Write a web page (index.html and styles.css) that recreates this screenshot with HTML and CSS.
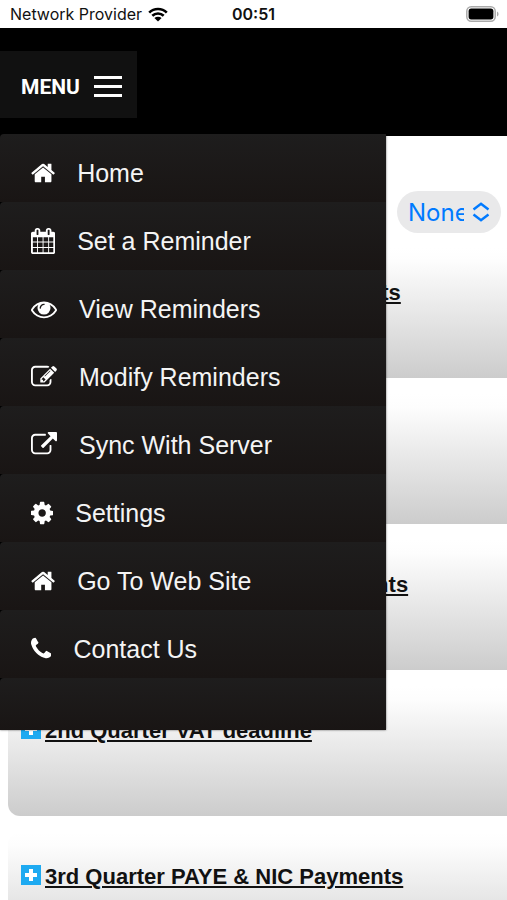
FILE: index.html
```html
<!DOCTYPE html>
<html lang="en">
<head>
  <meta charset="UTF-8">
  <meta name="viewport" content="width=device-width, initial-scale=1.0">
  <title>Reminders</title>
  <link rel="stylesheet" href="styles.css">
</head>
<body>
  <div class="status-bar">
    <div class="carrier">
      <span>Network Provider</span>
      <svg class="wifi" viewBox="0 0 20 15" aria-hidden="true">
        <path d="M1.2 5.6a12.6 12.6 0 0 1 17.6 0M4.3 8.8a8.2 8.2 0 0 1 11.4 0" fill="none" stroke="#000" stroke-width="2.6"/>
        <path d="M10 14.6l-3.6-3.5a5.2 5.2 0 0 1 7.2 0z"/>
      </svg>
    </div>
    <span class="time">00:51</span>
    <div class="power">
      <svg class="battery" viewBox="0 0 33 16" aria-hidden="true">
        <rect x="0.8" y="0.8" width="28.4" height="14.4" rx="4.4" fill="#fff" stroke="#aaa" stroke-width="1.5"/>
        <rect x="2.6" y="2.6" width="24.8" height="10.8" rx="2.6"/>
        <path d="M31 5.6q1.6.8 1.6 2.4t-1.6 2.4z" fill="#aaa"/>
      </svg>
    </div>
  </div>

  <header class="header">
    <button class="menu-button" id="menuButton" aria-controls="menu" aria-expanded="true">
      MENU
      <span class="bars"><span></span><span></span><span></span></span>
    </button>

    <nav class="menu" id="menu">
      <a href="#home">
        <svg viewBox="64 0 1664 1792"><path d="M1472 992v480q0 26-19 45t-45 19h-384v-384h-256v384h-384q-26 0-45-19t-19-45v-480q0-1 .5-3t.5-3l575-474 575 474q1 2 1 6zm223-69l-62 74q-8 9-21 11h-3q-13 0-21-7l-692-577-692 577q-12 8-24 7-13-2-21-11l-62-74q-8-10-7-23.5t11-21.5l719-599q32-26 76-26t76 26l244 204v-195q0-14 9-23t23-9h192q14 0 23 9t9 23v408l219 182q10 8 11 21.5t-7 23.5z"/></svg>
        Home
      </a>
      <a href="#set">
        <svg viewBox="64 0 1664 1792"><path d="M192 1664h288v-288h-288v288zm352 0h320v-288h-320v288zm-352-352h288v-320h-288v320zm352 0h320v-320h-320v320zm-352-384h288v-288h-288v288zm736 736h320v-288h-320v288zm-384-736h320v-288h-320v288zm768 736h288v-288h-288v288zm-384-352h320v-320h-320v320zm-352-864v-288q0-13-9.5-22.5t-22.5-9.5h-64q-13 0-22.5 9.5t-9.5 22.5v288q0 13 9.5 22.5t22.5 9.5h64q13 0 22.5-9.5t9.5-22.5zm736 864h288v-320h-288v320zm-384-384h320v-288h-320v288zm384 0h288v-288h-288v288zm32-480v-288q0-13-9.5-22.5t-22.5-9.5h-64q-13 0-22.5 9.5t-9.5 22.5v288q0 13 9.5 22.5t22.5 9.5h64q13 0 22.5-9.5t9.5-22.5zm384-64v1280q0 52-38 90t-90 38h-1408q-52 0-90-38t-38-90v-1280q0-52 38-90t90-38h128v-96q0-66 47-113t113-47h64q66 0 113 47t47 113v96h384v-96q0-66 47-113t113-47h64q66 0 113 47t47 113v96h128q52 0 90 38t38 90z"/></svg>
        Set a Reminder
      </a>
      <a href="#view">
        <svg viewBox="0 0 1792 1792"><path d="M1664 960q-152-236-381-353 61 104 61 225 0 185-131.5 316.5t-316.5 131.5-316.5-131.5-131.5-316.5q0-121 61-225-229 117-381 353 133 205 333.5 326.5t434.5 121.5 434.5-121.5 333.5-326.5zm-720-384q0-20-14-34t-34-14q-125 0-214.5 89.5t-89.5 214.5q0 20 14 34t34 14 34-14 14-34q0-86 61-147t147-61q20 0 34-14t14-34zm848 384q0 34-20 69-140 230-376.5 368.5t-499.5 138.5-499.5-139-376.5-368q-20-35-20-69t20-69q140-229 376.5-368t499.5-139 499.5 139 376.5 368q20 35 20 69z"/></svg>
        View Reminders
      </a>
      <a href="#modify">
        <svg viewBox="0 0 1792 1792"><path d="M888 1184l116-116-152-152-116 116v56h96v96h56zm440-720q-16-16-33 1l-350 350q-17 17-1 33t33-1l350-350q17-17 1-33zm80 594v190q0 119-84.5 203.5t-203.5 84.5h-832q-119 0-203.5-84.5t-84.5-203.5v-832q0-119 84.5-203.5t203.5-84.5h832q63 0 117 25 15 7 18 23 3 17-9 29l-49 49q-14 14-32 8-23-6-45-6h-832q-66 0-113 47t-47 113v832q0 66 47 113t113 47h832q66 0 113-47t47-113v-126q0-13 9-22l64-64q15-15 35-7t20 29zm-96-738l288 288-672 672h-288v-288zm444 132l-92 92-288-288 92-92q28-28 68-28t68 28l152 152q28 28 28 68t-28 68z"/></svg>
        Modify Reminders
      </a>
      <a href="#sync">
        <svg viewBox="0 0 1792 1792"><path d="M1408 928v320q0 119-84.5 203.5t-203.5 84.5h-832q-119 0-203.5-84.5t-84.5-203.5v-832q0-119 84.5-203.5t203.5-84.5h704q14 0 23 9t9 23v64q0 14-9 23t-23 9h-704q-66 0-113 47t-47 113v832q0 66 47 113t113 47h832q66 0 113-47t47-113v-320q0-14 9-23t23-9h64q14 0 23 9t9 23zm384-864v512q0 26-19 45t-45 19-45-19l-176-176-652 652q-10 10-23 10t-23-10l-114-114q-10-10-10-23t10-23l652-652-176-176q-19-19-19-45t19-45 45-19h512q26 0 45 19t19 45z"/></svg>
        Sync With Server
      </a>
      <a href="#settings">
        <svg viewBox="128 0 1536 1792"><path d="M1152 896q0-106-75-181t-181-75-181 75-75 181 75 181 181 75 181-75 75-181zm512-109v222q0 12-8 23t-20 13l-185 28q-19 54-39 91 35 50 107 138 10 12 10 25t-9 23q-27 37-99 108t-94 71q-12 0-26-9l-138-108q-44 23-91 38-16 136-29 186-7 28-36 28h-222q-14 0-24.5-8.5t-11.5-21.5l-28-184q-49-16-90-37l-141 107q-10 9-25 9-14 0-25-11-126-114-165-168-7-10-7-23 0-12 8-23 15-21 51-66.5t54-70.5q-27-50-41-99l-183-27q-13-2-21-12.5t-8-23.5v-222q0-12 8-23t19-13l186-28q14-46 39-92-40-57-107-138-10-12-10-24 0-10 9-23 26-36 98.5-107.5t94.5-71.5q13 0 26 10l138 107q44-23 91-38 16-136 29-186 7-28 36-28h222q14 0 24.5 8.5t11.5 21.5l28 184q49 16 90 37l142-107q9-9 24-9 13 0 25 10 129 119 165 170 7 8 7 22 0 12-8 23-15 21-51 66.5t-54 70.5q26 50 41 98l183 28q13 2 21 12.5t8 23.5z"/></svg>
        Settings
      </a>
      <a href="#website">
        <svg viewBox="64 0 1664 1792"><path d="M1472 992v480q0 26-19 45t-45 19h-384v-384h-256v384h-384q-26 0-45-19t-19-45v-480q0-1 .5-3t.5-3l575-474 575 474q1 2 1 6zm223-69l-62 74q-8 9-21 11h-3q-13 0-21-7l-692-577-692 577q-12 8-24 7-13-2-21-11l-62-74q-8-10-7-23.5t11-21.5l719-599q32-26 76-26t76 26l244 204v-195q0-14 9-23t23-9h192q14 0 23 9t9 23v408l219 182q10 8 11 21.5t-7 23.5z"/></svg>
        Go To Web Site
      </a>
      <a href="#contact">
        <svg viewBox="192 0 1408 1792"><path d="M1600 1240q0 27-10 70.5t-21 68.5q-21 50-122 106-94 51-186 51-27 0-52.5-3.5t-57.5-12.5-47.5-14.5-55.5-20.5-49-18q-98-35-175-83-128-79-264.5-215.5t-215.5-264.5q-48-77-83-175-3-9-18-49t-20.5-55.5-14.5-47.5-12.5-57.5-3.5-52.5q0-92 51-186 56-101 106-122 25-11 68.5-21t70.5-10q14 0 21 3 18 6 53 76 11 19 30 54t35 63.5 31 53.5q3 4 17.5 25t21.5 35.5 7 28.5q0 20-28.5 50t-62 55-62 53-28.5 46q0 9 5 22.5t8.5 20.5 14 24 11.5 19q76 137 174 235t235 174q2 1 19 11.5t24 14 20.5 8.5 22.5 5q18 0 46-28.5t53-62 55-62 50-28.5q14 0 28.5 7t35.5 21.5 25 17.5q25 15 53.5 31t63.5 35 54 30q70 35 76 53 3 7 3 21z"/></svg>
        Contact Us
      </a>
      <div class="menu-end"></div>
    </nav>
  </header>

  <main>
    <div class="filter">
      <select id="filter" aria-label="Filter">
        <option>None</option>
      </select>
      <svg class="chevrons" viewBox="0 0 18 20" aria-hidden="true">
        <path d="M1.5 7.4l7.5-5.6 7.5 5.6M1.5 12.6l7.5 5.6 7.5-5.6"/>
      </svg>
    </div>

    <ul class="reminders">
      <li><a href="#r1"><svg class="plus" viewBox="0 0 20 20"><path d="M10 4v12M4 10h12"/></svg><span>1st Quarter PAYE &amp; NIC Payments</span></a></li>
      <li><a href="#r2"><svg class="plus" viewBox="0 0 20 20"><path d="M10 4v12M4 10h12"/></svg><span>1st Quarter VAT deadline</span></a></li>
      <li><a href="#r3"><svg class="plus" viewBox="0 0 20 20"><path d="M10 4v12M4 10h12"/></svg><span>2nd Quarter PAYE &amp; NIC Payments</span></a></li>
      <li><a href="#r4"><svg class="plus" viewBox="0 0 20 20"><path d="M10 4v12M4 10h12"/></svg><span>2nd Quarter VAT deadline</span></a></li>
      <li><a href="#r5"><svg class="plus" viewBox="0 0 20 20"><path d="M10 4v12M4 10h12"/></svg><span>3rd Quarter PAYE &amp; NIC Payments</span></a></li>
    </ul>
  </main>

  <script>
    const menuButton = document.getElementById('menuButton');
    const menu = document.getElementById('menu');

    menuButton.addEventListener('click', () => {
      menu.hidden = !menu.hidden;
      menuButton.setAttribute('aria-expanded', !menu.hidden);
    });
  </script>
</body>
</html>
```
FILE: styles.css
```css
* {
  box-sizing: border-box;
}
html {
  scrollbar-width: none;
}
body {
  font-family: "Liberation Sans", Arial, sans-serif;
  margin: 0;
  background-color: #fff;
  color: #111;
}

.status-bar {
  display: grid;
  grid-template-columns: 1fr auto 1fr;
  align-items: center;
  height: 28px;
  padding: 0 8px;
  font-family: Inter, sans-serif;
  font-size: 16px;
  line-height: 28px;
}
.carrier {
  display: flex;
  align-items: center;
  gap: 6px;
  height: 28px;
  padding-left: 2px;
}
.wifi {
  width: 20px;
  height: 15px;
}
.time {
  font-weight: 600;
}
.power {
  display: flex;
  justify-content: flex-end;
}
.battery {
  width: 33px;
  height: 16px;
}

.header {
  position: relative;
  height: 108px;
  padding-top: 23px;
  background-color: #000;
}
.menu-button {
  display: flex;
  align-items: center;
  gap: 14px;
  height: 67px;
  padding: 4px 15px 0 21px;
  border: none;
  background-color: #111;
  color: #fff;
  font-family: Roboto, sans-serif;
  font-size: 21px;
  font-weight: 700;
  cursor: pointer;
}
.bars {
  display: flex;
  flex-direction: column;
  gap: 6px;
}
.bars span {
  width: 28px;
  height: 3px;
  background-color: #fff;
}

.menu {
  position: absolute;
  top: 106px;
  left: 0;
  z-index: 10;
  width: 386px;
  max-width: 100%;
  background-color: #000;
  box-shadow: 0 0 2px rgba(0, 0, 0, 0.6);
}
.menu[hidden] {
  display: none;
}
.menu a {
  display: flex;
  align-items: center;
  gap: 22px;
  height: 68px;
  padding: 10px 31px 0;
  color: #f4f4f4;
  font-size: 25px;
  text-decoration: none;
}
.menu a,
.menu-end {
  border-radius: 4px 0 0 0;
  background-image: linear-gradient(#1e1d1d, #191514);
}
.menu a:hover {
  background-image: linear-gradient(#2c2b2b, #242020);
}
.menu-end {
  height: 52px;
}
.menu svg {
  height: 26px;
  fill: #fff;
}

.filter {
  position: relative;
  width: 104px;
  margin: 55px 6px 0 auto;
}
.filter select {
  display: block;
  width: 100%;
  height: 42px;
  padding: 0 37px 0 11px;
  border: none;
  border-radius: 21px;
  appearance: none;
  background-color: #e9e9ea;
  color: #007aff;
  font-family: Inter, sans-serif;
  font-size: 24px;
  text-overflow: clip;
}
.chevrons {
  position: absolute;
  top: 11px;
  right: 11px;
  width: 18px;
  height: 20px;
  fill: none;
  stroke: #007aff;
  stroke-width: 2.5;
  pointer-events: none;
}

.reminders {
  display: flex;
  flex-direction: column;
  gap: 16px;
  margin: 15px 0 16px 8px;
  padding: 0;
  list-style: none;
}
.reminders li {
  height: 130px;
  padding: 32px 13px;
  border-radius: 12px 0 0 12px;
  background-image: linear-gradient(#fff, #fdfdfd 10%, #ccc);
}
.reminders a {
  display: flex;
  align-items: center;
  gap: 4px;
  color: #111;
  font-size: 22px;
  font-weight: 700;
  line-height: 26px;
  text-decoration: none;
  white-space: nowrap;
}
.reminders span {
  text-decoration: underline;
  text-decoration-thickness: 2px;
  text-underline-offset: 2px;
}
.plus {
  width: 20px;
  height: 20px;
  margin-bottom: 4px;
  background-color: #1eaaf1;
  fill: none;
  stroke: #fff;
  stroke-width: 4;
}
```
